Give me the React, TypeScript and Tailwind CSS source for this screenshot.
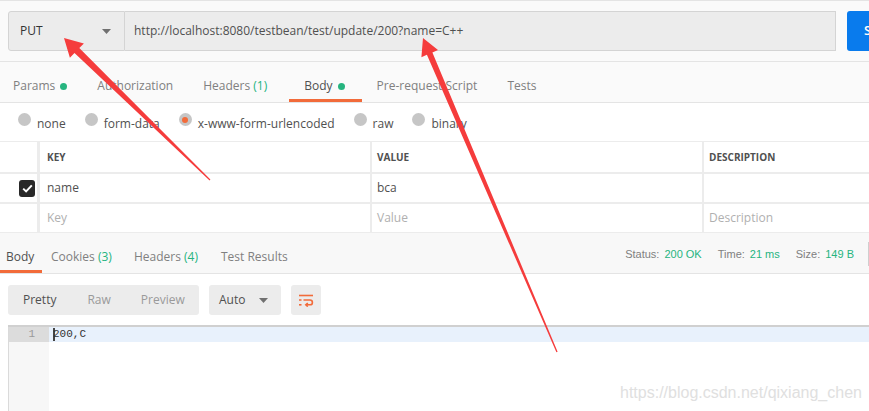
import React from 'react';

const green = 'text-[#26b47f]';

function Caret({ className = '' }: { className?: string }) {
  return (
    <svg className={className} width="9" height="5" viewBox="0 0 9 5">
      <path d="M0 0h9L4.5 5z" fill="#707070" />
    </svg>
  );
}

function Dot() {
  return <span className="ml-[5px] inline-block w-[7px] h-[7px] rounded-full bg-[#26b47f]" />;
}

function Radio({ label, checked = false }: { label: string; checked?: boolean }) {
  return (
    <div className="flex items-center">
      <span className="relative -top-[4px] w-[13px] h-[13px] rounded-full bg-[#c6c6c6] flex items-center justify-center">
        {checked && <span className="w-[6px] h-[6px] rounded-full bg-[#f26b3a]" />}
      </span>
      <span className="ml-[6px] text-[#505050]">{label}</span>
    </div>
  );
}

// annotation arrows drawn over the screenshot
function Arrow({ tail, tip, head = 18, wing = 10, shaft = 3.5 }: { tail: [number, number]; tip: [number, number]; head?: number; wing?: number; shaft?: number }) {
  const dx = tip[0] - tail[0];
  const dy = tip[1] - tail[1];
  const len = Math.hypot(dx, dy);
  const ux = dx / len;
  const uy = dy / len;
  const nx = -uy;
  const ny = ux;
  const bx = tip[0] - head * ux;
  const by = tip[1] - head * uy;
  const pts = [
    [tail[0] + 0.6 * nx, tail[1] + 0.6 * ny],
    [bx + shaft * nx, by + shaft * ny],
    [bx + wing * nx, by + wing * ny],
    tip,
    [bx - wing * nx, by - wing * ny],
    [bx - shaft * nx, by - shaft * ny],
    [tail[0] - 0.6 * nx, tail[1] - 0.6 * ny],
  ];
  return <polygon points={pts.map((p) => `${p[0].toFixed(1)},${p[1].toFixed(1)}`).join(' ')} fill="#f53c3c" />;
}

export default function App() {
  return (
    <div className="relative w-[869px] h-[411px] overflow-hidden bg-white text-[12px] font-['Open_Sans',sans-serif]">
      {/* url bar */}
      <div className="h-[62px] bg-[#fafafa] border-t border-b border-[#e4e4e4] flex items-center pl-[8px] gap-[11px]">
        <div className="flex h-[40px] shrink-0">
          <div className="w-[117px] h-full bg-[#ececec] border border-[#d4d4d4] rounded-l-[3px] flex items-center justify-between pl-[11px] pr-[13px] text-[#333]">
            <span>PUT</span>
            <Caret />
          </div>
          <div className="w-[711px] h-full bg-[#ececec] border border-l-0 border-[#d4d4d4] flex items-center pl-[9px] text-[#505050]">
            http://localhost:8080/testbean/test/update/200?name=C++
          </div>
        </div>
        <div className="w-[100px] h-[40px] shrink-0 bg-[#097bed] rounded-[3px] flex items-center text-white font-semibold text-[13px]">
          <span className="ml-[17px]">Send</span>
        </div>
      </div>

      {/* request tabs */}
      <div className="h-[41px] pt-[8px] bg-[#fafafa] border-b border-[#e4e4e4] flex items-stretch whitespace-nowrap overflow-hidden text-[#808080]">
        <div className="pl-[13px] pr-[15px] flex items-center">Params<Dot /></div>
        <div className="px-[15px] flex items-center">Authorization</div>
        <div className="pl-[15px] pr-[22px] flex items-center">Headers&nbsp;<span className={green}>(1)</span></div>
        <div className="pl-[15px] pr-[17px] flex items-center text-[#505050] border-b-[3px] border-[#f26b3a] pt-[3px]">Body<Dot /></div>
        <div className="px-[15px] flex items-center">Pre-request Script</div>
        <div className="px-[15px] flex items-center">Tests</div>
        <div className="ml-[318px] flex items-center text-[#f26b3a]">Cookies</div>
      </div>

      {/* body type */}
      <div className="h-[38px] flex items-center pl-[18px] gap-[19px] pt-[3px] whitespace-nowrap">
        <Radio label="none" />
        <Radio label="form-data" />
        <Radio label="x-www-form-urlencoded" checked />
        <Radio label="raw" />
        <Radio label="binary" />
      </div>

      {/* params table */}
      <div className="border-t border-b border-[#ececec] grid grid-cols-[37px_331px_330px_1fr] gap-x-[2px] gap-y-[2px] [&>div]:bg-white bg-[#ececec]">
        <div className="h-[30px]" />
        <div className="h-[30px] flex items-center pl-[7px] text-[10px] font-bold text-[#505050] ml-[1px]">KEY</div>
        <div className="h-[30px] flex items-center pl-[5px] text-[10px] font-bold text-[#505050]">VALUE</div>
        <div className="h-[30px] flex items-center pl-[5px] text-[10px] font-bold text-[#505050]">DESCRIPTION</div>

        <div className="h-[28px] flex items-center pl-[19px]">
          <span className="w-[16px] h-[17px] rounded-[3px] bg-[#282828] flex items-center justify-center">
            <svg width="11" height="9" viewBox="0 0 11 9">
              <path d="M1.2 4.6l2.9 2.8L9.8 1.4" fill="none" stroke="#fff" strokeWidth="2" />
            </svg>
          </span>
        </div>
        <div className="h-[28px] flex items-center pl-[7px] ml-[1px] text-[#505050]">name</div>
        <div className="h-[28px] flex items-center pl-[5px] text-[#505050]">bca</div>
        <div className="h-[28px]" />

        <div className="h-[28px]" />
        <div className="h-[28px] flex items-center pl-[7px] ml-[1px] text-[#b0b0b0]">Key</div>
        <div className="h-[28px] flex items-center pl-[5px] text-[#b0b0b0]">Value</div>
        <div className="h-[28px] flex items-center pl-[5px] text-[#b0b0b0]">Description</div>
      </div>

      {/* response tabs */}
      <div className="h-[41px] pt-[8px] bg-[#f8f8f8] border-b border-[#e4e4e4] flex items-stretch whitespace-nowrap text-[#808080]">
        <div className="w-[42px] pl-[6px] flex items-center text-[#505050] border-b-[3px] border-[#f26b3a] pt-[3px]">Body</div>
        <div className="w-[83px] ml-[9px] flex items-center">Cookies&nbsp;<span className={green}>(3)</span></div>
        <div className="w-[87px] flex items-center">Headers&nbsp;<span className={green}>(4)</span></div>
        <div className="flex items-center">Test Results</div>
        <div className="ml-auto flex items-center font-['Liberation_Sans',Arial,sans-serif] text-[11px] pb-[6px]">
          <span>Status:</span>
          <span className={`ml-[5px] ${green}`}>200 OK</span>
          <span className="ml-[16px]">Time:</span>
          <span className={`ml-[5px] ${green}`}>21 ms</span>
          <span className="ml-[16px]">Size:</span>
          <span className={`ml-[5px] ${green}`}>149 B</span>
          <span className="ml-[14px] w-px h-[24px] bg-[#cfcfcf]" />
        </div>
      </div>

      {/* response toolbar */}
      <div className="flex items-center gap-[10px] pl-[8px] pt-[11px] h-[41px]">
        <div className="w-[191px] h-[30px] bg-[#ececec] rounded-[3px] flex items-center pl-[15px] text-[#9a9a9a]">
          <span className="text-[#505050]">Pretty</span>
          <span className="ml-[31px]">Raw</span>
          <span className="ml-[30px]">Preview</span>
        </div>
        <div className="w-[72px] h-[30px] bg-[#ececec] rounded-[3px] flex items-center pl-[10px] pr-[13px] justify-between text-[#505050]">
          <span>Auto</span>
          <Caret />
        </div>
        <div className="w-[30px] h-[30px] bg-[#ececec] rounded-[3px] flex items-center justify-center">
          <svg width="16" height="14" viewBox="0 0 16 14" fill="none" stroke="#f26b3a" strokeWidth="1.6">
            <path d="M1 2.5h14" />
            <path d="M1 7h2.5M5.5 7h6.5a2.4 2.4 0 0 1 0 4.8H8" />
            <path d="M9.8 10l-2 1.8 2 1.8" />
            <path d="M1 11.8h2.5" />
          </svg>
        </div>
      </div>

      {/* editor */}
      <div className="ml-[8px] mt-[10px] border-t-2 border-[#d0d0d0] flex h-[200px]">
        <div className="w-[41px] bg-[#f7f7f7] border-l border-[#dadada]">
          <div className="h-[15px] bg-[#dcdcdc] text-right pr-[14px] font-['Liberation_Mono',monospace] text-[11px] leading-[15px] text-[#999]">1</div>
        </div>
        <div className="flex-1">
          <div className="h-[15px] bg-[#e8f1fc] pl-[4px] font-['Liberation_Mono',monospace] text-[11px] leading-[15px] text-[#333] flex items-center">
            <span className="w-[2px] h-[13px] bg-[#444] -mr-[2px]" />
            200,C
          </div>
        </div>
      </div>

      {/* watermark */}
      <div className="absolute left-[620px] top-[381px] font-['Liberation_Sans',Arial,sans-serif] text-[16px] text-[#e0e0e0] whitespace-nowrap">
        https://blog.csdn.net/qixiang_chen
      </div>

      <svg className="absolute inset-0 pointer-events-none" width="869" height="411">
        <Arrow tail={[210, 180]} tip={[64, 38]} />
        <Arrow tail={[557, 352]} tip={[423, 38]} head={17} wing={9} shaft={3} />
      </svg>
    </div>
  );
}
